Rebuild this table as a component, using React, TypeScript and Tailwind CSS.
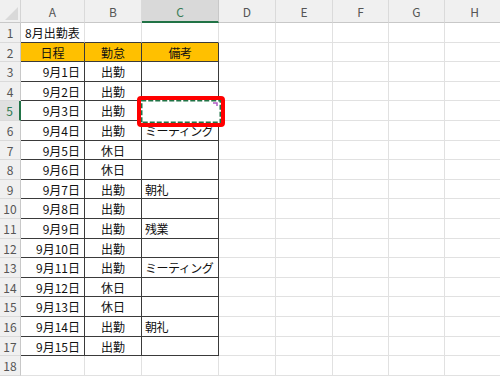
import React from "react";

const W = [
  "w-[21px]",
  "w-[64px]",
  "w-[57px]",
  "w-[77px]",
  "w-[57px]",
  "w-[57px]",
  "w-[56px]",
  "w-[56px]",
  "w-[60px]",
];
const H = ["h-[20px]", "h-[19px]", "h-[20px]", "h-[19px]", "h-[20px]"];
const LETTERS = ["A", "B", "C", "D", "E", "F", "G", "H"];

type Row = [string, string, string];
const data: Row[] = [
  ["日程", "勤怠", "備考"],
  ["9月1日", "出勤", ""],
  ["9月2日", "出勤", ""],
  ["9月3日", "出勤", ""],
  ["9月4日", "出勤", "ミーティング"],
  ["9月5日", "休日", ""],
  ["9月6日", "休日", ""],
  ["9月7日", "出勤", "朝礼"],
  ["9月8日", "出勤", ""],
  ["9月9日", "出勤", "残業"],
  ["9月10日", "出勤", ""],
  ["9月11日", "出勤", "ミーティング"],
  ["9月12日", "休日", ""],
  ["9月13日", "休日", ""],
  ["9月14日", "出勤", "朝礼"],
  ["9月15日", "出勤", ""],
];

const font = { fontFamily: '"Noto Sans CJK JP", "Noto Sans", sans-serif' };

function cellText(r: number, c: number): string {
  if (r === 1) return c === 1 ? "8月出勤表" : "";
  if (r >= 2 && r <= 17 && c <= 3) return data[r - 2][c - 1];
  return "";
}

function Cell({ r, c }: { r: number; c: number }) {
  const inTable = r >= 2 && r <= 17 && c <= 3;
  const darkRight = inTable;
  const darkBottom = r >= 1 && r <= 17 && c <= 3;
  const orange = r === 2 && c <= 3;
  let align = "justify-start pl-[4px]";
  if (r === 2) align = "justify-center";
  else if (r >= 3 && c === 1) align = "justify-end pr-[4px]";
  else if (r >= 3 && c === 2) align = "justify-center";
  else if (c === 3) align = "justify-start pl-[3px]";
  return (
    <div
      className={`${W[c]} shrink-0 h-full flex items-center pt-[1px] border-r border-b whitespace-nowrap overflow-visible text-[12px] text-[#111] ${align} ${
        darkRight ? "border-r-[#3a3a3a]" : "border-r-[#e1e1e1]"
      } ${darkBottom ? "border-b-[#3a3a3a]" : "border-b-[#e1e1e1]"} ${
        orange ? "bg-[#ffc000]" : "bg-white"
      } ${c === 3 ? "tracking-[-0.5px]" : ""}`}
    >
      {cellText(r, c)}
    </div>
  );
}

export default function App() {
  const rows = Array.from({ length: 18 }, (_, i) => i + 1);
  return (
    <div
      className="relative w-[500px] h-[377px] overflow-hidden bg-white"
      style={font}
    >
      {/* column header */}
      <div className="flex h-[23px]">
        <div
          className={`${W[0]} shrink-0 h-full bg-[#f0f0f0] border-r border-b border-r-[#d4d4d4] border-b-[#c8c8c8] flex items-end justify-end p-[2px]`}
        >
          <svg width="13" height="13" viewBox="0 0 13 13">
            <polygon points="13,0 13,13 0,13" fill="#d9d9d9" />
          </svg>
        </div>
        {LETTERS.map((L, i) => (
          <div
            key={L}
            className={`${W[i + 1]} shrink-0 h-full flex items-center justify-center pt-[2px] text-[12px] border-r ${
              L === "C"
                ? "bg-[#d9d9d9] text-[#3b7d57] border-b-2 border-b-[#217346] border-r-[#c8c8c8]"
                : "bg-[#f0f0f0] text-[#555] border-b border-b-[#c8c8c8] border-r-[#dadada]"
            }`}
          >
            {L}
          </div>
        ))}
      </div>

      {rows.map((r) => (
        <div key={r} className={`flex ${H[(r - 1) % 5]}`}>
          <div
            className={`${W[0]} shrink-0 h-full flex items-center justify-center pt-[1px] text-[12px] border-b border-b-[#dadada] ${
              r === 5
                ? "bg-[#e0e0e0] text-[#2f7a50] border-r-2 border-r-[#217346]"
                : "bg-[#f0f0f0] text-[#555] border-r border-r-[#c8c8c8]"
            }`}
          >
            {r}
          </div>
          {[1, 2, 3, 4, 5, 6, 7, 8].map((c) => (
            <Cell key={c} r={r} c={c} />
          ))}
        </div>
      ))}

      {/* copy marquee on C5 */}
      <svg
        className="absolute left-[140px] top-[99px]"
        width="82"
        height="25"
        viewBox="0 0 82 25"
      >
        <rect x="1" y="1" width="80" height="23" fill="white" />
        <rect
          x="1.25"
          y="1.25"
          width="79.5"
          height="22.5"
          fill="none"
          stroke="#217346"
          strokeWidth="2.5"
          strokeDasharray="5 2"
        />
        <path d="M73 4 L77 4 L77 7" fill="none" stroke="#b05cc7" strokeWidth="1.5" />
      </svg>

      {/* red annotation frame */}
      <div className="absolute left-[137px] top-[96px] w-[88px] h-[31px] border-4 border-[#ff0000] rounded-[4px]" />
    </div>
  );
}
